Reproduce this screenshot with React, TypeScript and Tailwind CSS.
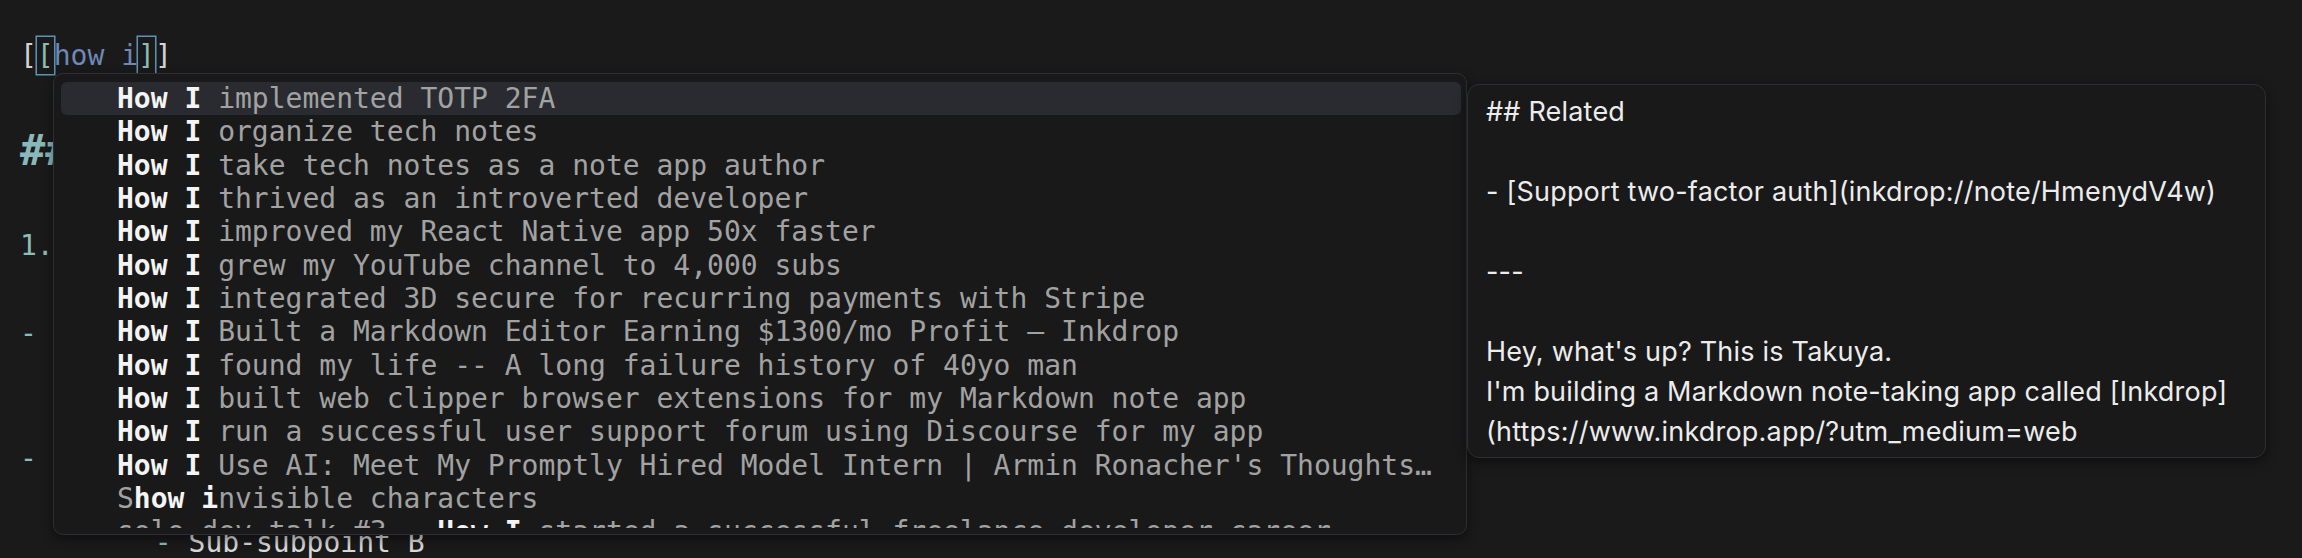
import React from "react";

type Seg = { t: string; b?: boolean };

const items: Seg[][] = [
  [{ t: "How I", b: true }, { t: " implemented TOTP 2FA" }],
  [{ t: "How I", b: true }, { t: " organize tech notes" }],
  [{ t: "How I", b: true }, { t: " take tech notes as a note app author" }],
  [{ t: "How I", b: true }, { t: " thrived as an introverted developer" }],
  [{ t: "How I", b: true }, { t: " improved my React Native app 50x faster" }],
  [{ t: "How I", b: true }, { t: " grew my YouTube channel to 4,000 subs" }],
  [{ t: "How I", b: true }, { t: " integrated 3D secure for recurring payments with Stripe" }],
  [{ t: "How I", b: true }, { t: " Built a Markdown Editor Earning $1300/mo Profit \u2013 Inkdrop" }],
  [{ t: "How I", b: true }, { t: " found my life -- A long failure history of 40yo man" }],
  [{ t: "How I", b: true }, { t: " built web clipper browser extensions for my Markdown note app" }],
  [{ t: "How I", b: true }, { t: " run a successful user support forum using Discourse for my app" }],
  [
    { t: "How I", b: true },
    { t: " Use AI: Meet My Promptly Hired Model Intern | Armin Ronacher's Thoughts and Writings" },
  ],
  [{ t: "S" }, { t: "how", b: true }, { t: " " }, { t: "i", b: true }, { t: "nvisible characters" }],
  [
    { t: "solo dev talk #3 \u2013 " },
    { t: "How I", b: true },
    { t: " started a successful freelance developer career" },
  ],
];

export default function App() {
  return (
    <div className="relative h-[558px] w-full overflow-hidden bg-[#1a1a1b] font-['DejaVu_Sans_Mono',monospace] text-[28px]">
      {/* Editor content */}
      <div className="flex flex-col pl-[20px] pt-[37px]">
        <div className="h-[37px] leading-[37px] whitespace-pre">
          <span className="text-[#d4d4d4]">[</span>
          <span className="inline-block h-[37px] shadow-[0_0_0_1.5px_#5d93b5] text-[#8cbcb4]">[</span>
          <span className="text-[#6f88b6]">how i</span>
          <span className="inline-block h-[37px] shadow-[0_0_0_1.5px_#5d93b5] text-[#8cbcb4]">]</span>
          <span className="text-[#d4d4d4]">]</span>
        </div>
        <div className="mt-[51.5px] h-[50px] text-[42px] font-bold leading-[50px] text-[#8ab8b8] whitespace-pre">
          ## Notes on writing
        </div>
        <div className="mt-[51.5px] h-[37px] leading-[37px] whitespace-pre">
          <span className="text-[#8cbcb9]">1.</span>
          <span className="text-[#d8d8d8]"> First point</span>
        </div>
        <div className="mt-[51px] h-[37px] leading-[37px] whitespace-pre">
          <span className="text-[#8cbcb9]">-</span>
          <span className="text-[#d8d8d8]"> Subpoint A</span>
        </div>
        <div className="mt-[88px] h-[37px] leading-[37px] whitespace-pre">
          <span className="text-[#8cbcb9]">-</span>
          <span className="text-[#d8d8d8]"> Subpoint B</span>
        </div>
        <div className="mt-[47px] h-[37px] leading-[37px] whitespace-pre">
          <span>{"        "}</span>
          <span className="text-[#8cbcb9]">-</span>
          <span className="text-[#d8d8d8]"> Sub-subpoint B</span>
        </div>
      </div>

      {/* Autocomplete popup */}
      <div className="absolute left-[53px] top-[73px] flex h-[462px] w-[1414px] flex-col rounded-[10px] border border-[#2e2f34] bg-[#19191a] pb-[6px] pl-[7px] pr-[5px] pt-[8px] shadow-[0_4px_12px_rgba(0,0,0,0.45)]">
        <div className="flex min-h-0 flex-1 flex-col overflow-hidden">
          {items.map((segs, i) => (
            <div
              key={i}
              className={
                "flex h-[33.33px] shrink-0 items-center rounded-[6px] pl-[56px] pr-[20px] " +
                (i === 0 ? "bg-[#2a2b30]" : "")
              }
            >
              <div className="min-w-0 flex-1 overflow-hidden text-ellipsis whitespace-pre leading-[33.33px] text-[#a2a2a2]">
                {segs.map((s, j) =>
                  s.b ? (
                    <span key={j} className="font-bold text-[#f4f4f4]">
                      {s.t}
                    </span>
                  ) : (
                    <span key={j}>{s.t}</span>
                  )
                )}
              </div>
            </div>
          ))}
        </div>
      </div>

      {/* Note preview panel */}
      <div className="absolute left-[1467px] top-[84px] h-[374px] w-[799px] overflow-hidden rounded-[12px] border border-[#2e2f34] bg-[#19191a] px-[18px] pt-[7px] font-['Inter',sans-serif] text-[27px] leading-[40px] tracking-[0.2px] text-[#ececec] shadow-[0_4px_12px_rgba(0,0,0,0.45)]">
        <div>## Related</div>
        <div className="h-[40px]" />
        <div>- [Support two-factor auth](inkdrop://note/HmenydV4w)</div>
        <div className="h-[40px]" />
        <div>---</div>
        <div className="h-[40px]" />
        <div>Hey, what's up? This is Takuya.</div>
        <div>I'm building a Markdown note-taking app called [Inkdrop]</div>
        <div>(https://www.inkdrop.app/?utm_medium=web</div>
      </div>
    </div>
  );
}
